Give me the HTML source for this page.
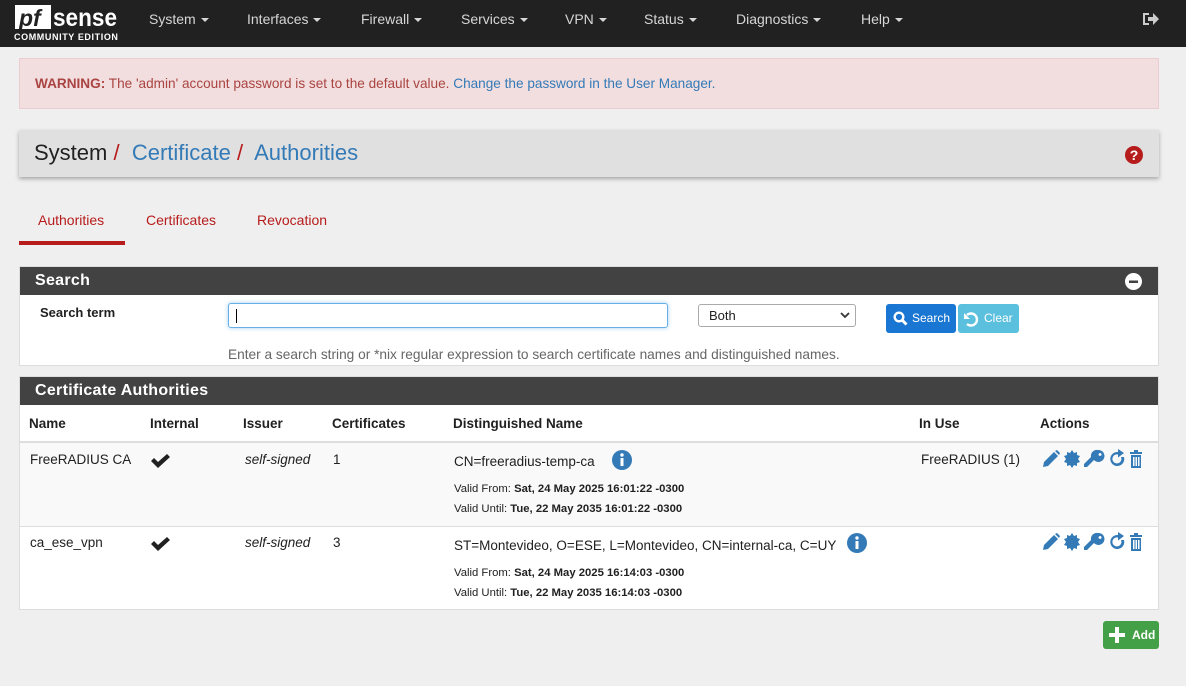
<!DOCTYPE html>
<html><head><meta charset="utf-8"><style>
*{box-sizing:border-box}
body{margin:0;width:1186px;height:686px;overflow:hidden;background:#efefef;font-family:"Liberation Sans",sans-serif;font-size:14px;color:#212121}
.nav{height:47px;background:#212121;position:relative;color:#ccc}
.logo{position:absolute;left:14px;top:4px}
.menu{position:absolute;top:0;height:47px;line-height:38px;font-size:14px;color:#d6d6d6}
.menu span{position:absolute;white-space:nowrap}
.caret{display:inline-block;border-left:4px solid transparent;border-right:4px solid transparent;border-top:4px solid #d6d6d6;vertical-align:middle;margin-left:5px}
.warn{position:absolute;left:19px;top:58px;width:1140px;height:51px;background:#f2dede;border:1px solid #ebccd1;color:#a94442;padding:17px 15px;font-size:13.6px}
.warn a{color:#337ab7}
.bc{position:absolute;left:19px;top:130px;width:1140px;height:47px;background:#e0e0e0;box-shadow:0 2px 4px rgba(0,0,0,.3);font-size:22px;padding:10px 15px;white-space:pre}
.bc .s{color:#b71c1c}
.bc .l{color:#337ab7}
.tabs{position:absolute;top:212px;font-size:14px;color:#b71c1c}
.panel{position:absolute;left:19px;width:1140px;background:#fff;border:1px solid #ddd}
.ph{background:#424242;color:#fff;font-size:16px;font-weight:bold;height:28px;line-height:28px;padding-left:15px;letter-spacing:.3px}
.abs{position:absolute}
.ico path{fill:#337ab7}
</style></head><body>
<div class="nav">
 <div class="logo">
  <svg width="106" height="26"><rect x="1" y="1" width="36" height="24" fill="#fff"/><text x="5" y="22" font-family="Liberation Sans" font-weight="bold" font-style="italic" font-size="23" fill="#212121">pf</text><text x="39" y="22" font-family="Liberation Sans" font-weight="bold" font-size="25" fill="#fff" textLength="64" lengthAdjust="spacingAndGlyphs">sense</text></svg>
  <div style="color:#fff;font-size:9px;font-weight:bold;letter-spacing:.6px;margin-top:-1px">COMMUNITY EDITION</div>
 </div>
 <div class="menu" style="left:0;width:1186px">
  <span style="left:149px">System<i class="caret"></i></span>
  <span style="left:247px">Interfaces<i class="caret"></i></span>
  <span style="left:361px">Firewall<i class="caret"></i></span>
  <span style="left:461px">Services<i class="caret"></i></span>
  <span style="left:565px">VPN<i class="caret"></i></span>
  <span style="left:644px">Status<i class="caret"></i></span>
  <span style="left:736px">Diagnostics<i class="caret"></i></span>
  <span style="left:861px">Help<i class="caret"></i></span>
 </div>
 <svg class="abs" style="left:1141px;top:11px" width="18" height="16"><path d="M2 2h6v2H4v8h4v2H2z M7 6h5V2l6 6-6 6v-4H7z" fill="#ccc"/></svg>
</div>
<div class="warn"><b>WARNING:</b> The 'admin' account password is set to the default value. <a>Change the password in the User Manager.</a></div>
<div class="bc">System<span class="s"> / </span> <span class="l">Certificate</span><span class="s"> / </span> <span class="l">Authorities</span>
 <svg class="abs" style="right:16px;top:16px" width="18" height="18"><circle cx="9" cy="9" r="9" fill="#b71c1c"/><text x="9" y="14" text-anchor="middle" font-size="14" font-weight="bold" fill="#fff" font-family="Liberation Sans">?</text></svg>
</div>
<div class="tabs" style="left:38px">Authorities</div>
<div class="abs" style="left:19px;top:241px;width:106px;height:4px;background:#b71c1c"></div>
<div class="tabs" style="left:146px">Certificates</div>
<div class="tabs" style="left:257px">Revocation</div>

<div class="panel" style="top:266px;height:100px">
 <div class="ph">Search<svg class="abs" style="right:16px;top:6px" width="17" height="17"><circle cx="8.5" cy="8.5" r="8.5" fill="#fff"/><rect x="4" y="7.5" width="9" height="2.5" fill="#424242"/></svg></div>
 <div class="abs" style="left:20px;top:38px;font-weight:bold;font-size:13px">Search term</div>
 <div class="abs" style="left:208px;top:36px;width:440px;height:25px;border:1px solid #66afe9;border-radius:3px;box-shadow:0 0 4px rgba(102,175,233,.6)"><div style="position:absolute;left:7px;top:5px;width:1px;height:14px;background:#000"></div></div>
 <div class="abs" style="left:678px;top:37px;width:158px;height:23px;border:1px solid #aaa;border-radius:3px;padding:3px 10px;font-size:13px">Both<svg class="abs" style="right:5px;top:7px" width="10" height="8"><path d="M1 1l4 4 4-4" stroke="#333" stroke-width="1.8" fill="none"/></svg></div>
 <div class="abs" style="left:866px;top:37px;width:70px;height:29px;background:#1976d2;border-radius:3px;color:#fff;font-size:12px;line-height:29px;padding-left:26px"><svg class="abs" style="left:7px;top:7px" width="15" height="15"><circle cx="6" cy="6" r="4.3" stroke="#fff" stroke-width="2.4" fill="none"/><path d="M9 9l4.5 4.5" stroke="#fff" stroke-width="3"/></svg>Search</div>
 <div class="abs" style="left:938px;top:37px;width:61px;height:29px;background:#5bc0de;border-radius:3px;color:#fff;font-size:12px;line-height:29px;padding-left:26px"><svg class="abs" style="left:5px;top:7px" width="16" height="16"><path d="M4 4a6 6 0 1 1 0 9" stroke="#fff" stroke-width="2.4" fill="none"/><path d="M1 2v6h6z" fill="#fff"/></svg>Clear</div>
 <div class="abs" style="left:208px;top:80px;font-size:13.7px;color:#666">Enter a search string or *nix regular expression to search certificate names and distinguished names.</div>
</div>

<div class="panel" style="top:376px;height:234px">
 <div class="ph">Certificate Authorities</div>
 <div class="abs" style="left:0;top:28px;width:1138px;height:38px;border-bottom:2px solid #ddd;font-weight:bold;font-size:13.5px">
  <span class="abs" style="left:9px;top:11px">Name</span><span class="abs" style="left:130px;top:11px">Internal</span><span class="abs" style="left:223px;top:11px">Issuer</span><span class="abs" style="left:312px;top:11px">Certificates</span><span class="abs" style="left:433px;top:11px">Distinguished Name</span><span class="abs" style="left:899px;top:11px">In Use</span><span class="abs" style="left:1020px;top:11px">Actions</span>
 </div>
 <div class="abs" style="left:0;top:66px;width:1138px;height:84px;background:#f9f9f9;border-bottom:1px solid #ddd"></div>
 <div class="abs" style="left:10px;top:75px;font-size:13.5px">FreeRADIUS CA</div>
 <svg class="abs" style="left:130px;top:76px" width="20" height="16"><path d="M1 8l3-3 4 4 9-8 3 3-12 11z" fill="#212121"/></svg>
 <div class="abs" style="left:225px;top:75px;font-style:italic;font-size:13.5px">self-signed</div>
 <div class="abs" style="left:313px;top:75px;font-size:13.5px">1</div>
 <div class="abs" style="left:434px;top:77px;font-size:13.5px">CN=freeradius-temp-ca</div>
 <svg class="abs" style="left:592px;top:73px" width="20" height="20"><circle cx="10" cy="10" r="10" fill="#337ab7"/><rect x="8.5" y="8" width="3" height="8" fill="#fff"/><circle cx="10" cy="5" r="1.7" fill="#fff"/></svg>
 <div class="abs" style="left:434px;top:106px;font-size:11.3px">Valid From: <b>Sat, 24 May 2025 16:01:22 -0300</b></div>
 <div class="abs" style="left:434px;top:126px;font-size:11.3px">Valid Until: <b>Tue, 22 May 2035 16:01:22 -0300</b></div>
 <div class="abs" style="left:901px;top:75px;font-size:13.5px">FreeRADIUS (1)</div>
 <div class="abs" style="left:10px;top:158px;font-size:13.5px">ca_ese_vpn</div>
 <svg class="abs" style="left:130px;top:159px" width="20" height="16"><path d="M1 8l3-3 4 4 9-8 3 3-12 11z" fill="#212121"/></svg>
 <div class="abs" style="left:225px;top:158px;font-style:italic;font-size:13.5px">self-signed</div>
 <div class="abs" style="left:313px;top:158px;font-size:13.5px">3</div>
 <div class="abs" style="left:434px;top:161px;font-size:13.5px">ST=Montevideo, O=ESE, L=Montevideo, CN=internal-ca, C=UY</div>
 <svg class="abs" style="left:827px;top:156px" width="20" height="20"><circle cx="10" cy="10" r="10" fill="#337ab7"/><rect x="8.5" y="8" width="3" height="8" fill="#fff"/><circle cx="10" cy="5" r="1.7" fill="#fff"/></svg>
 <div class="abs" style="left:434px;top:190px;font-size:11.3px">Valid From: <b>Sat, 24 May 2025 16:14:03 -0300</b></div>
 <div class="abs" style="left:434px;top:210px;font-size:11.3px">Valid Until: <b>Tue, 22 May 2035 16:14:03 -0300</b></div>
 <svg class="abs ico" style="left:1021px;top:72px" width="104" height="20">
  <path d="M2 18l1-5L13 3l4 4L7 17z M14 2l2-1 3 3-1 2z"/>
  <path d="M31 1l2 3 3-1 0 3 3 1-2 3 2 3-3 1 0 3-3-1-2 3-2-3-3 1 0-3-3-1 2-3-2-3 3-1 0-3 3 1z"/>
  <path d="M57 1a6 6 0 1 1-4 10l-7 7h-3v-3l7-7a6 6 0 0 1 7-7zm2 3a1.5 1.5 0 1 0 .1 0z"/>
  <path d="M77 3a7 7 0 1 0 6 5l-3 0a4.5 4.5 0 1 1-3-2.5v3l6-4.5-6-4z"/>
  <path d="M89 3h4V1h4v2h4v2H89z M90 6h10v13H90z"/><path d="M92 8h1.5v9H92zM94.5 8H96v9h-1.5zM97 8h1.5v9H97z" style="fill:#f9f9f9"/>
 </svg>
 <svg class="abs ico" style="left:1021px;top:155px" width="104" height="20">
  <path d="M2 18l1-5L13 3l4 4L7 17z M14 2l2-1 3 3-1 2z"/>
  <path d="M31 1l2 3 3-1 0 3 3 1-2 3 2 3-3 1 0 3-3-1-2 3-2-3-3 1 0-3-3-1 2-3-2-3 3-1 0-3 3 1z"/>
  <path d="M57 1a6 6 0 1 1-4 10l-7 7h-3v-3l7-7a6 6 0 0 1 7-7zm2 3a1.5 1.5 0 1 0 .1 0z"/>
  <path d="M77 3a7 7 0 1 0 6 5l-3 0a4.5 4.5 0 1 1-3-2.5v3l6-4.5-6-4z"/>
  <path d="M89 3h4V1h4v2h4v2H89z M90 6h10v13H90z"/><path d="M92 8h1.5v9H92zM94.5 8H96v9h-1.5zM97 8h1.5v9H97z" style="fill:#fff"/>
 </svg>
</div>
<div class="abs" style="left:1103px;top:621px;width:56px;height:28px;background:#43a047;border-radius:3px;color:#fff;font-size:12px;font-weight:bold;line-height:28px;padding-left:29px"><svg class="abs" style="left:6px;top:6px" width="16" height="16"><path d="M6 0h4v6h6v4h-6v6H6v-6H0V6h6z" fill="#fff"/></svg>Add</div>
</body></html>
